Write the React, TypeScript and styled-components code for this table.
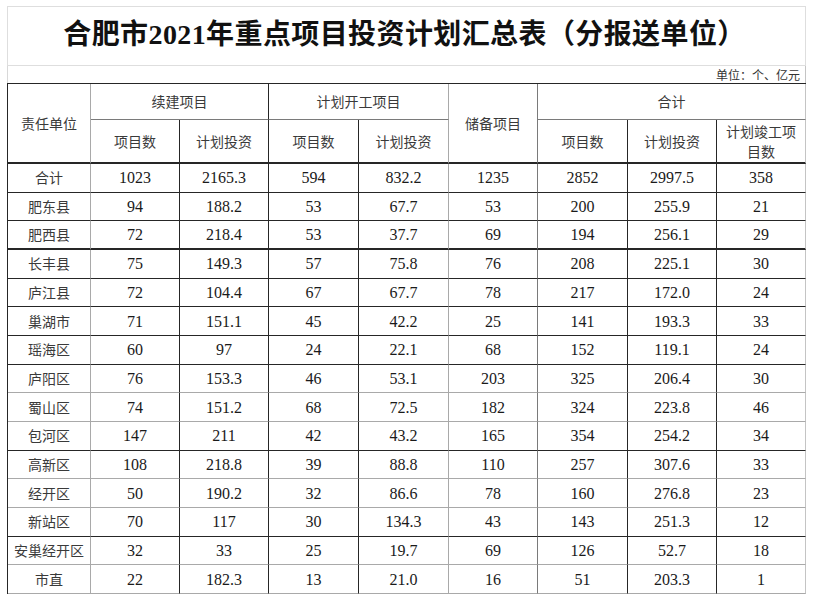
import React from "react";
import styled, { createGlobalStyle } from "styled-components";

const GlobalStyle = createGlobalStyle`
  html, body { margin: 0; padding: 0; background: #ffffff; }
  body { font-family: "Noto Sans CJK SC", "Liberation Sans", sans-serif; color: #1c1c1c; }
`;

const DARK = "#262626";
const MID = "#7a7a7a";
const GRAY = "#a9a9a9";
const LIGHT = "#c4c4c4";

const Page = styled.div`
  padding: 6px 0 0 7px;
  width: 799px;
`;

const TitleBox = styled.div`
  box-sizing: border-box;
  height: 60px;
  border: 1px solid #dedede;
  display: flex;
  align-items: center;
  justify-content: center;
  padding-bottom: 3px;
  padding-right: 4px;
`;

const Title = styled.h1`
  margin: 0;
  font-family: "Liberation Serif", "Noto Sans CJK SC", serif;
  font-weight: 700;
  font-size: 28px;
  line-height: 32px;
  color: #111;
  letter-spacing: 0.4px;
`;

const UnitRow = styled.div`
  box-sizing: border-box;
  height: 17px;
  border-left: 1px solid #d8d8d8;
  border-right: 1px solid ${LIGHT};
  display: flex;
  justify-content: flex-end;
  align-items: center;
  padding-right: 5px;
  font-size: 12px;
  line-height: 14px;
  color: #333;
`;

const Table = styled.table`
  border-collapse: separate;
  border-spacing: 0;
  table-layout: fixed;
  width: 799px;
  border-top: 1px solid ${DARK};
  border-left: 1px solid ${DARK};
`;

const Cell = styled.td<{ $right: string; $bottom: string; $bw?: number; $num?: boolean }>`
  box-sizing: border-box;
  padding: 0;
  text-align: center;
  vertical-align: middle;
  border-right: 1px solid ${(p) => p.$right};
  border-bottom: ${(p) => p.$bw ?? 1}px solid ${(p) => p.$bottom};
  font-family: ${(p) =>
    p.$num
      ? `"Liberation Serif", "Noto Sans CJK SC", serif`
      : `"Noto Sans CJK SC", "Liberation Sans", sans-serif`};
  font-size: ${(p) => (p.$num ? "16px" : "14px")};
  color: ${(p) => (p.$num ? "#1a1a1a" : "#3a3a3a")};
  line-height: 19px;
  white-space: nowrap;
`;

const HeadCell = styled(Cell).attrs({ as: "th" })`
  font-weight: 400;
`;

const WrapText = styled.span`
  display: inline-block;
  width: 72px;
  white-space: normal;
  line-height: 20px;
`;

const HeadRow1 = styled.tr`
  height: 36px;
`;
const HeadRow2 = styled.tr`
  height: 44px;
`;
const DataRow = styled.tr`
  height: 28.667px;
`;

const colRight = [GRAY, DARK, DARK, DARK, GRAY, MID, DARK, DARK, LIGHT];
const colWidths = [83, 89, 89, 90, 90, 89, 90, 89, 89];

type Row = { name: string; v: (string | number)[]; line: "d" | "t" | "g" };

const rows: Row[] = [
  { name: "合计", v: [1023, "2165.3", 594, "832.2", 1235, 2852, "2997.5", 358], line: "d" },
  { name: "肥东县", v: [94, "188.2", 53, "67.7", 53, 200, "255.9", 21], line: "d" },
  { name: "肥西县", v: [72, "218.4", 53, "37.7", 69, 194, "256.1", 29], line: "t" },
  { name: "长丰县", v: [75, "149.3", 57, "75.8", 76, 208, "225.1", 30], line: "d" },
  { name: "庐江县", v: [72, "104.4", 67, "67.7", 78, 217, "172.0", 24], line: "d" },
  { name: "巢湖市", v: [71, "151.1", 45, "42.2", 25, 141, "193.3", 33], line: "d" },
  { name: "瑶海区", v: [60, "97", 24, "22.1", 68, 152, "119.1", 24], line: "d" },
  { name: "庐阳区", v: [76, "153.3", 46, "53.1", 203, 325, "206.4", 30], line: "g" },
  { name: "蜀山区", v: [74, "151.2", 68, "72.5", 182, 324, "223.8", 46], line: "g" },
  { name: "包河区", v: [147, "211", 42, "43.2", 165, 354, "254.2", 34], line: "d" },
  { name: "高新区", v: [108, "218.8", 39, "88.8", 110, 257, "307.6", 33], line: "g" },
  { name: "经开区", v: [50, "190.2", 32, "86.6", 78, 160, "276.8", 23], line: "g" },
  { name: "新站区", v: [70, "117", 30, "134.3", 43, 143, "251.3", 12], line: "d" },
  { name: "安巢经开区", v: [32, "33", 25, "19.7", 69, 126, "52.7", 18], line: "g" },
  { name: "市直", v: [22, "182.3", 13, "21.0", 16, 51, "203.3", 1], line: "g" },
];

const lineColor = (l: Row["line"]) => (l === "g" ? GRAY : DARK);
const lineWidth = (l: Row["line"]) => (l === "t" ? 2 : 1);

export default function App() {
  return (
    <>
      <GlobalStyle />
      <Page>
        <TitleBox>
          <Title>合肥市2021年重点项目投资计划汇总表（分报送单位）</Title>
        </TitleBox>
        <UnitRow>单位：个、亿元</UnitRow>
        <Table>
          <colgroup>
            {colWidths.map((w, i) => (
              <col key={i} style={{ width: w }} />
            ))}
          </colgroup>
          <thead>
            <HeadRow1>
              <HeadCell rowSpan={2} $right={colRight[0]} $bottom={DARK} $bw={2}>
                责任单位
              </HeadCell>
              <HeadCell colSpan={2} $right={colRight[2]} $bottom={MID}>
                续建项目
              </HeadCell>
              <HeadCell colSpan={2} $right={colRight[4]} $bottom={MID}>
                计划开工项目
              </HeadCell>
              <HeadCell rowSpan={2} $right={colRight[5]} $bottom={DARK} $bw={2}>
                储备项目
              </HeadCell>
              <HeadCell colSpan={3} $right={colRight[8]} $bottom={MID}>
                合计
              </HeadCell>
            </HeadRow1>
            <HeadRow2>
              <HeadCell $right={colRight[1]} $bottom={DARK} $bw={2}>项目数</HeadCell>
              <HeadCell $right={colRight[2]} $bottom={DARK} $bw={2}>计划投资</HeadCell>
              <HeadCell $right={colRight[3]} $bottom={DARK} $bw={2}>项目数</HeadCell>
              <HeadCell $right={colRight[4]} $bottom={DARK} $bw={2}>计划投资</HeadCell>
              <HeadCell $right={colRight[6]} $bottom={DARK} $bw={2}>项目数</HeadCell>
              <HeadCell $right={colRight[7]} $bottom={DARK} $bw={2}>计划投资</HeadCell>
              <HeadCell $right={colRight[8]} $bottom={DARK} $bw={2}>
                <WrapText>计划竣工项目数</WrapText>
              </HeadCell>
            </HeadRow2>
          </thead>
          <tbody>
            {rows.map((r) => (
              <DataRow key={r.name}>
                <Cell $right={colRight[0]} $bottom={lineColor(r.line)} $bw={lineWidth(r.line)}>
                  {r.name}
                </Cell>
                {r.v.map((v, i) => (
                  <Cell
                    key={i}
                    $num
                    $right={colRight[i + 1]}
                    $bottom={lineColor(r.line)}
                    $bw={lineWidth(r.line)}
                  >
                    {v}
                  </Cell>
                ))}
              </DataRow>
            ))}
          </tbody>
        </Table>
      </Page>
    </>
  );
}
